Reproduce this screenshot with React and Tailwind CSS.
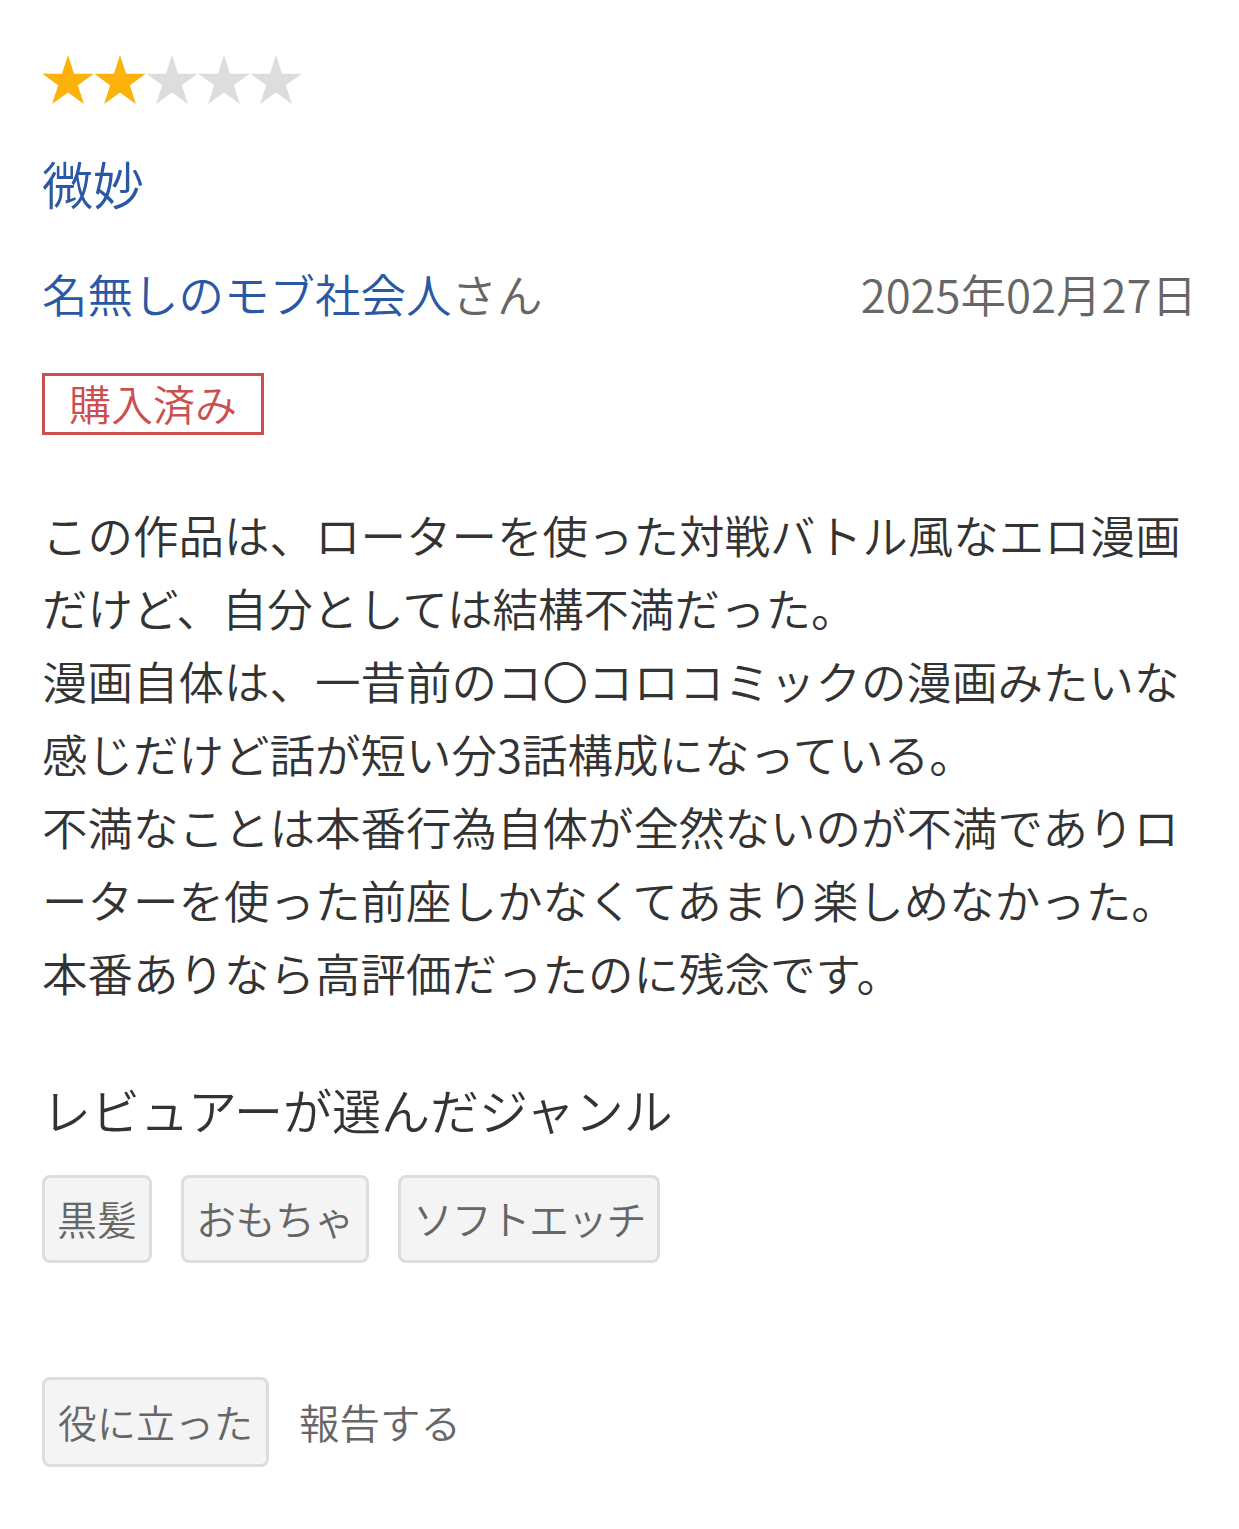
import React from "react";

const FONT = { fontFamily: '"Noto Sans CJK JP", "Noto Sans", sans-serif', fontWeight: 350 };

function Star({ filled }) {
  return (
    <svg width="52" height="49" viewBox="1.27 0 49.46 47.03" className="block">
      <polygon
        points="26,0 31.84,17.97 50.73,17.97 35.44,29.07 41.28,47.03 26,35.93 10.72,47.03 16.56,29.07 1.27,17.97 20.16,17.97"
        fill={filled ? "#FDB10B" : "#DDDDDD"}
      />
    </svg>
  );
}

const lines = [
  "この作品は、ローターを使った対戦バトル風なエロ漫画",
  "だけど、自分としては結構不満だった。",
  "漫画自体は、一昔前のコ〇コロコミックの漫画みたいな",
  "感じだけど話が短い分3話構成になっている。",
  "不満なことは本番行為自体が全然ないのが不満でありロ",
  "ーターを使った前座しかなくてあまり楽しめなかった。",
  "本番ありなら高評価だったのに残念です。",
];

const tags = [
  { t: "黒髪", cls: "" },
  { t: "おもちゃ", cls: "tracking-[-0.5px]" },
  { t: "ソフトエッチ", cls: "tracking-[-1.3px]" },
];

export default function App() {
  return (
    <div className="w-[1239px] min-h-[1529px] bg-white px-[42px] pt-[55px] pb-[62px]" style={FONT}>
      <div className="flex">
        <Star filled />
        <Star filled />
        <Star />
        <Star />
        <Star />
      </div>

      <div className="mt-[49px] text-[51px] leading-[60px] text-[#2a58a5]">微妙</div>

      <div className="mt-[50px] flex items-center justify-between text-[45.5px] leading-[60px]">
        <div>
          <span className="text-[#2a58a5]">名無しのモブ社会人</span>
          <span className="text-[#666666]">さん</span>
        </div>
        <div className="text-[#666666]">2025年02月27日</div>
      </div>

      <div className="mt-[50px] flex">
        <div className="border-[3px] border-[#cc4f4f] px-[24px] pb-[2px] text-[42px] leading-[54px] text-[#cc4f4f]">
          購入済み
        </div>
      </div>

      <div className="mt-[63px] text-[45.5px] leading-[73px] text-[#333333]">
        {lines.map((l, i) => (
          <div key={i} className="whitespace-nowrap">
            {l}
          </div>
        ))}
      </div>

      <div className="mt-[70px] text-[49px] leading-[60px] text-[#333333]">レビュアーが選んだジャンル</div>

      <div className="mt-[36px] flex gap-[29px]">
        {tags.map(({ t, cls }) => (
          <div
            key={t}
            className={`rounded-[8px] border-[3px] border-[#dddddd] bg-[#f4f4f4] px-[12px] pt-[12px] pb-[14px] text-[40px] leading-[56px] text-[#666666] ${cls}`}
          >
            {t}
          </div>
        ))}
      </div>

      <div className="mt-[114px] flex items-center gap-[30px]">
        <div className="rounded-[8px] border-[3px] border-[#dddddd] bg-[#f4f4f4] px-[13px] pt-[13px] pb-[15px] text-[39px] leading-[56px] text-[#666666]">
          役に立った
        </div>
        <div className="text-[40.5px] leading-[56px] text-[#666666]">報告する</div>
      </div>
    </div>
  );
}
